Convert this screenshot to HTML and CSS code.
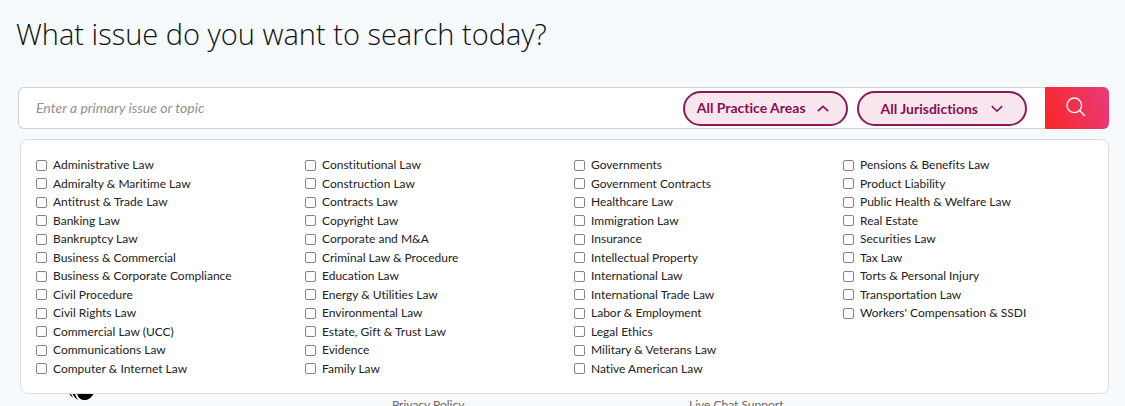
FILE: index.html
```html
<!DOCTYPE html>
<html lang="en">
<head>
<meta charset="utf-8">
<meta name="viewport" content="width=device-width, initial-scale=1">
<title>Issue search</title>
<link rel="stylesheet" href="styles.css">
</head>
<body>
<main class="page">
  <h1 class="title">What issue do you want to search today?</h1>
  <form class="search">
    <input class="search-input" type="text" placeholder="Enter a primary issue or topic" aria-label="Primary issue or topic">
    <div class="filters">
      <button class="pill" type="button" aria-expanded="true">All Practice Areas
        <svg class="chevron" viewBox="0 0 12 8" aria-hidden="true"><path d="M.8 7.2 6 2.4 11.2 7.2"/></svg>
      </button>
      <button class="pill pill-wide" type="button" aria-expanded="false">All Jurisdictions
        <svg class="chevron" viewBox="0 0 12 8" aria-hidden="true"><path d="M.8 2.2 6 7 11.2 2.2"/></svg>
      </button>
    </div>
    <button class="search-button" type="submit" aria-label="Search">
      <svg class="search-icon" viewBox="0 0 20 20" aria-hidden="true"><circle cx="8.3" cy="8.3" r="7.3"/><path d="M13.6 13.6 19 19"/></svg>
    </button>
  </form>
  <div class="panel">
    <label class="option"><input type="checkbox">Administrative Law</label>
    <label class="option"><input type="checkbox">Admiralty &amp; Maritime Law</label>
    <label class="option"><input type="checkbox">Antitrust &amp; Trade Law</label>
    <label class="option"><input type="checkbox">Banking Law</label>
    <label class="option"><input type="checkbox">Bankruptcy Law</label>
    <label class="option"><input type="checkbox">Business &amp; Commercial</label>
    <label class="option"><input type="checkbox">Business &amp; Corporate Compliance</label>
    <label class="option"><input type="checkbox">Civil Procedure</label>
    <label class="option"><input type="checkbox">Civil Rights Law</label>
    <label class="option"><input type="checkbox">Commercial Law (UCC)</label>
    <label class="option"><input type="checkbox">Communications Law</label>
    <label class="option"><input type="checkbox">Computer &amp; Internet Law</label>
    <label class="option"><input type="checkbox">Constitutional Law</label>
    <label class="option"><input type="checkbox">Construction Law</label>
    <label class="option"><input type="checkbox">Contracts Law</label>
    <label class="option"><input type="checkbox">Copyright Law</label>
    <label class="option"><input type="checkbox">Corporate and M&amp;A</label>
    <label class="option"><input type="checkbox">Criminal Law &amp; Procedure</label>
    <label class="option"><input type="checkbox">Education Law</label>
    <label class="option"><input type="checkbox">Energy &amp; Utilities Law</label>
    <label class="option"><input type="checkbox">Environmental Law</label>
    <label class="option"><input type="checkbox">Estate, Gift &amp; Trust Law</label>
    <label class="option"><input type="checkbox">Evidence</label>
    <label class="option"><input type="checkbox">Family Law</label>
    <label class="option"><input type="checkbox">Governments</label>
    <label class="option"><input type="checkbox">Government Contracts</label>
    <label class="option"><input type="checkbox">Healthcare Law</label>
    <label class="option"><input type="checkbox">Immigration Law</label>
    <label class="option"><input type="checkbox">Insurance</label>
    <label class="option"><input type="checkbox">Intellectual Property</label>
    <label class="option"><input type="checkbox">International Law</label>
    <label class="option"><input type="checkbox">International Trade Law</label>
    <label class="option"><input type="checkbox">Labor &amp; Employment</label>
    <label class="option"><input type="checkbox">Legal Ethics</label>
    <label class="option"><input type="checkbox">Military &amp; Veterans Law</label>
    <label class="option"><input type="checkbox">Native American Law</label>
    <label class="option"><input type="checkbox">Pensions &amp; Benefits Law</label>
    <label class="option"><input type="checkbox">Product Liability</label>
    <label class="option"><input type="checkbox">Public Health &amp; Welfare Law</label>
    <label class="option"><input type="checkbox">Real Estate</label>
    <label class="option"><input type="checkbox">Securities Law</label>
    <label class="option"><input type="checkbox">Tax Law</label>
    <label class="option"><input type="checkbox">Torts &amp; Personal Injury</label>
    <label class="option"><input type="checkbox">Transportation Law</label>
    <label class="option"><input type="checkbox">Workers' Compensation &amp; SSDI</label>
  </div>
</main>
<footer class="footer">
  <svg class="footer-logo" viewBox="0 0 28 8" aria-hidden="true"><path d="M8 0H24.500Q21 6 15.500 6 10 6 8 0ZM3.500 0H6Q7.500 4 9 6 5.500 4 3.500 0ZM.5 0H2L4 3.500Q1.500 2 .5 0Z"/></svg>
  <a class="footer-link" href="#">Privacy Policy</a>
  <a class="footer-link" href="#">Live Chat Support</a>
</footer>
</body>
</html>
```
FILE: styles.css
```css
* {
  box-sizing: border-box;
}

html,
body {
  height: 100%;
}

body {
  margin: 0;
  overflow: hidden;
  background: #f6fafd;
  color: #222;
  font-family: Lato, "Liberation Sans", sans-serif;
  font-size: 12px;
  font-variant-ligatures: none;
}

.page {
  padding: 12px 16px 0;
}

.title {
  margin: 0 0 31px;
  color: #111;
  font-family: "Open Sans", "Noto Sans", sans-serif;
  font-size: 29px;
  font-weight: 300;
  line-height: 44px;
}

.search {
  display: flex;
  height: 42px;
  margin-left: 2px;
  border: 1px solid #cfd3d6;
  border-right: 0;
  border-radius: 6px;
  background: #fff;
}

.search-input {
  flex: 1;
  min-width: 0;
  padding: 0 17px 2px;
  border: 0;
  background: transparent;
  color: #333;
  font: 14px Lato, "Liberation Sans", sans-serif;
}

.search-input::placeholder {
  color: #919191;
  font-style: italic;
}

.filters {
  display: flex;
  align-items: center;
  gap: 9px;
  padding-right: 18px;
}

.pill {
  display: flex;
  align-items: center;
  gap: 11px;
  height: 35px;
  padding: 0 17px 1px 12px;
  border: 2px solid #8a1a5c;
  border-radius: 18px;
  background: #f7e6ee;
  color: #860f54;
  font: bold 14px Lato, "Liberation Sans", sans-serif;
  font-variant-ligatures: none;
  white-space: nowrap;
}

.pill-wide {
  gap: 13px;
  padding: 0 22px;
}

.chevron {
  width: 12px;
  height: 8px;
  fill: none;
  stroke: currentColor;
  stroke-width: 1.6;
}

.search-button {
  display: flex;
  align-items: center;
  justify-content: center;
  width: 64px;
  margin: -1px 0;
  padding: 0 2px 2px 0;
  border: 0;
  border-radius: 0 6px 6px 0;
  background: linear-gradient(70deg, #fa2525, #e93b7c);
}

.search-icon {
  width: 20px;
  height: 20px;
  fill: none;
  stroke: #fff;
  stroke-width: 1.4;
}

.panel {
  display: grid;
  grid-template-rows: repeat(12, 1fr);
  grid-template-columns: repeat(4, 1fr);
  grid-auto-flow: column;
  column-gap: 4px;
  height: 255px;
  margin: 10px 0 0 4px;
  padding: 16px 0 15px 15px;
  border: 1px solid #dcdfe2;
  border-radius: 8px;
  background: #fff;
}

.option {
  display: flex;
  align-items: center;
  gap: 6px;
  min-height: 0;
  line-height: 18px;
  white-space: nowrap;
}

.option input {
  appearance: none;
  width: 11px;
  height: 11px;
  margin: 0;
  border: 1px solid #858585;
  border-radius: 2px;
  background: #fff;
}

.option input:checked {
  background: #860f54;
}

.footer {
  display: grid;
  grid-template-columns: 323px 297px 1fr;
  padding-left: 69px;
}

.footer-logo {
  width: 28px;
  height: 8px;
}

.footer-link {
  padding-top: 3px;
  color: #666;
  line-height: 16px;
  text-decoration: none;
}
```
